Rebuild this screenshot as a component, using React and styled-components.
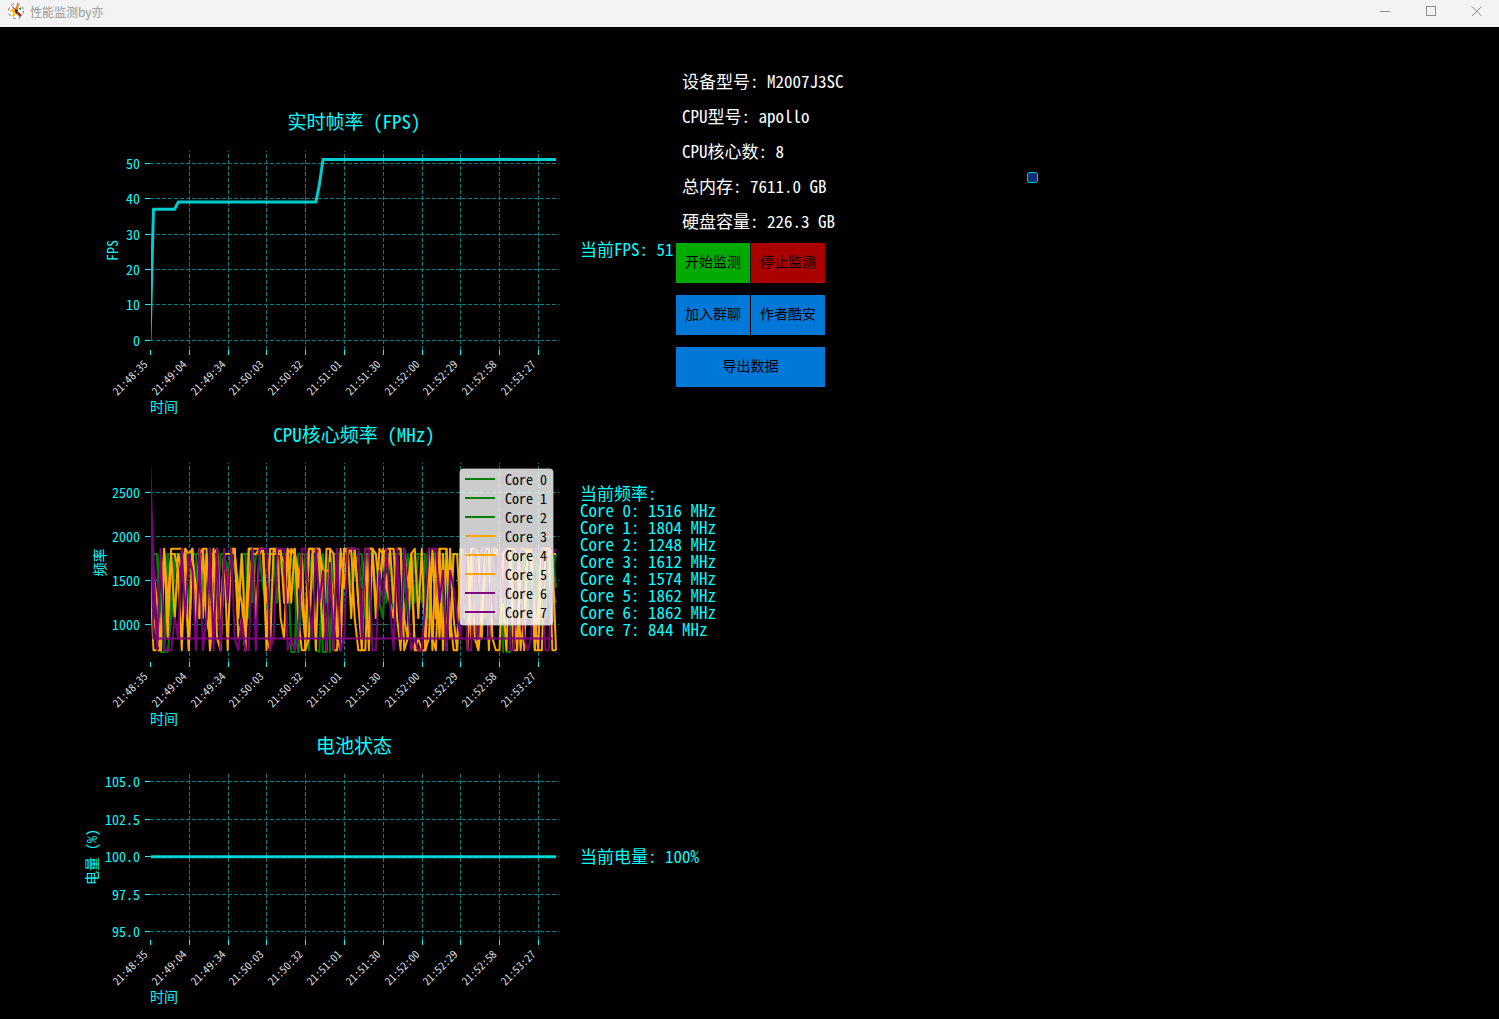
import React from 'react';
import styled, { createGlobalStyle } from 'styled-components';

const CYAN = '#00ffff';

const GlobalStyle = createGlobalStyle`
  body {
    margin: 0;
    background: #000;
    color: #fff;
    font-family: 'Noto Sans CJK SC', sans-serif;
  }
`;

const Window = styled.div`
  display: flex;
  flex-direction: column;
  min-height: 100vh;
  background: #000;
`;

const TitleBar = styled.header`
  display: flex;
  align-items: center;
  height: 27px;
  padding-left: 8px;
  background: #f3f3f3;
  color: #999;
`;

const AppTitle = styled.h1`
  flex: 1;
  margin: 0 0 4px 6px;
  font-size: 12px;
  line-height: 16px;
  font-weight: 400;
`;

const AppIcon = styled.svg`
  width: 16px;
  height: 16px;
  margin-bottom: 5px;
`;

const WindowButton = styled.button`
  display: flex;
  align-items: center;
  justify-content: center;
  width: 46px;
  height: 27px;
  padding: 0 0 5px;
  border: 0;
  background: none;
`;

const Glyph = styled.svg`
  width: 11px;
  height: 11px;
  fill: none;
  stroke: #8c8c8c;
`;

const Dashboard = styled.main`
  flex: 1;
  font-feature-settings: 'hwid';
`;

const Row = styled.section`
  display: flex;
  align-items: flex-start;
`;

const ChartSvg = styled.svg`
  display: block;
  flex: none;
`;

const ChartTitle = styled.text`
  fill: ${CYAN};
  font-size: 19px;
  text-anchor: middle;
`;

const AxisText = styled.text`
  fill: ${CYAN};
  font-size: 14px;
  text-anchor: ${({ $anchor }) => $anchor || 'start'};
`;

const TimeText = styled.text`
  fill: #ddd;
  font-size: 11px;
  text-anchor: end;
`;

const LegendText = styled.text`
  fill: #000;
  font-size: 14px;
`;

const GridLine = styled.line`
  stroke: #008080;
  stroke-dasharray: 4 2;
  shape-rendering: crispEdges;
`;

const Tick = styled.line`
  stroke: ${CYAN};
  shape-rendering: crispEdges;
`;

const Series = styled.polyline`
  fill: none;
  stroke: ${({ $color }) => $color};
  stroke-width: ${({ $width }) => $width || 2}px;
  stroke-opacity: ${({ $opacity }) => $opacity || 1};
  stroke-linejoin: round;
`;

const Status = styled.div`
  display: flex;
  flex-direction: column;
  justify-content: center;
  box-sizing: border-box;
  min-width: 104px;
  height: ${({ $height }) => $height}px;
  margin-top: ${({ $top }) => $top}px;
  padding: 0 0 4px 8px;
  color: ${CYAN};
  font-size: 17px;
  line-height: 17px;
  white-space: nowrap;
`;

const CoreList = styled.ul`
  margin: 0;
  padding: 0;
  list-style: none;
`;

const Controls = styled.div`
  padding-top: 36px;
`;

const DeviceInfo = styled.div`
  padding: 0 0 5px 6px;
  font-size: 17px;
  line-height: 35px;
  white-space: nowrap;
`;

const Buttons = styled.div`
  display: grid;
  grid-template-columns: 74px 74px;
  gap: 12px 1px;
`;

const ActionButton = styled.button`
  grid-column: span ${({ $span }) => $span || 1};
  height: 40px;
  padding: 0 0 4px;
  border: 0;
  background: ${({ $color }) => $color || '#0078d7'};
  color: #000;
  font-family: inherit;
  font-size: 14px;
  white-space: nowrap;
`;

const Marker = styled.span`
  box-sizing: border-box;
  width: 11px;
  height: 11px;
  margin: 145px 0 0 183px;
  border: 1px solid #00d0d8;
  border-radius: 3px;
  background: #0d2f7a;
`;

const CHART_WIDTH = 572;
const PLOT_LEFT = 150;
const PLOT_RIGHT = 559;
const SAMPLE_STEP = 3.53;

const times = [
  '21:48:35', '21:49:04', '21:49:34', '21:50:03', '21:50:32', '21:51:01',
  '21:51:30', '21:52:00', '21:52:29', '21:52:58', '21:53:27',
];

const deviceInfo = [
  '设备型号: M2007J3SC',
  'CPU型号: apollo',
  'CPU核心数: 8',
  '总内存: 7611.0 GB',
  '硬盘容量: 226.3 GB',
];

// One character per sample, each one a frequency step of the governor
const steps = {
  0: 691, 1: 710, 2: 844, 3: 1075, 4: 1250,
  5: 1420, 6: 1612, 7: 1700, 8: 1804, 9: 1862, A: 2840,
};

const decode = log => log.split('').map(c => steps[c]);

const cores = [
  { color: 'green', now: 1516, log: '6880088368888838388388588388358888888886850588588008388888853838858483883584888388835888888583886838483888638853388545' },
  { color: 'green', now: 1804, log: '5883083887488885388438688488848854888858008884688580888885688388843885888348548388885688835888438858083886838883886888' },
  { color: 'green', now: 1248, log: '6884103688848385844838586584388884384888580881810848568888685888348888835848884388888588888843888638800884888388885434' },
  { color: 'orange', now: 1612, log: '6111929999519289919218199231999994888874986429996299119599941999858999319581111821999311988821999211899419989119991166' },
  { color: 'orange', now: 1574, log: '6641838386918539328918889382588991999329895812899519823989311199398594991281211293919288391998291998419981398149998166' },
  { color: 'orange', now: 1862, log: '6321948861989393814938498541993892198949493119919666421993942819459543993289391919281931988291382988499118198311998888' },
  { color: 'purple', now: 1862, log: 'A7191113293861913919194921311919991299912129942946171912999929911649419294121149994616532911929929394911992129991189' },
  { color: 'purple', now: 844, log: 'A'.padEnd(115, '2') },
];

const fps = Array.from({ length: 116 }, (_, i) => {
  if (i === 0) return 0;
  if (i < 8) return 37;
  if (i < 48) return 39;
  return i === 48 ? 44 : 51;
});

const battery = Array(116).fill(100);

function Chart({ height, title, titleY, top, bottom, ticks, scale, yLabel, yLabelX, children }) {
  const clipId = `plot-${top}-${bottom}`;
  return (
    <ChartSvg
      width={CHART_WIDTH}
      height={height}
      viewBox={`0 0 ${CHART_WIDTH} ${height}`}
      role="img"
      aria-label={title}
    >
      <clipPath id={clipId}>
        <rect x={PLOT_LEFT + 1} y={top} width={PLOT_RIGHT - PLOT_LEFT} height={bottom - top} />
      </clipPath>
      <ChartTitle x="354" y={titleY}>{title}</ChartTitle>
      <AxisText
        $anchor="middle"
        transform={`translate(${yLabelX} ${(top + bottom) / 2}) rotate(-90)`}
      >
        {yLabel}
      </AxisText>
      {ticks.map(tick => {
        const y = Math.floor(scale(Number(tick))) + 0.5;
        return (
          <g key={tick}>
            <GridLine x1={PLOT_LEFT} x2={PLOT_RIGHT} y1={y} y2={y} />
            <Tick x1={PLOT_LEFT - 5} x2={PLOT_LEFT} y1={y} y2={y} />
            <AxisText $anchor="end" x="140" y={y + 5}>{tick}</AxisText>
          </g>
        );
      })}
      {times.map((time, i) => {
        const x = Math.round(PLOT_LEFT + i * 38.8) + 0.5;
        return (
          <g key={time}>
            {i > 0 && <GridLine x1={x} x2={x} y1={bottom} y2={top} />}
            <Tick x1={x} x2={x} y1={bottom} y2={bottom + 5} />
            <TimeText transform={`translate(${x - 2} ${bottom + 15}) rotate(-45)`}>
              {time}
            </TimeText>
          </g>
        );
      })}
      <g clipPath={`url(#${clipId})`}>{children}</g>
      <AxisText x="150" y={bottom + 62}>时间</AxisText>
    </ChartSvg>
  );
}

const toPoints = (values, scale) =>
  values
    .slice(0, 116)
    .map((v, i) => `${(PLOT_LEFT + i * SAMPLE_STEP).toFixed(1)},${scale(v).toFixed(1)}`)
    .join(' ');

const fpsScale = v => 313.4 - v * 3.545;
const freqScale = v => 297.7 - v * 0.088;
const batteryScale = v => 129.7 - (v - 100) * 15.05;

function Legend() {
  return (
    <g>
      <rect x="460" y="54" width="93" height="156" rx="3" fill="#fff" fillOpacity="0.8" stroke="#ccc" strokeOpacity="0.8" />
      {cores.map((core, i) => (
        <g key={i}>
          <line x1="465" x2="495" y1={64 + i * 19} y2={64 + i * 19} stroke={core.color} strokeWidth="2" />
          <LegendText x="505" y={70 + i * 19}>Core {i}</LegendText>
        </g>
      ))}
    </g>
  );
}

export default function App() {
  return (
    <Window>
      <GlobalStyle />
      <TitleBar>
        <AppIcon viewBox="0 0 16 16" aria-hidden="true">
          <circle cx="8" cy="8" r="7.5" fill="#fff" stroke="#777" strokeDasharray="3 3" />
          <path d="M3 2l6 5-2 2z" fill="#e34a1a" />
          <path d="M9 1l2 1-2 6-2-1z" fill="#f07818" />
          <path d="M1 7l6-1 2 2-3 2z" fill="#f5b800" />
          <path d="M6 8l3 0-3 6-2-1z" fill="#f5c400" />
          <path d="M7 6l3 1-1 4-2-2z" fill="#222" />
          <path d="M9 8l5 4-2 2-4-4z" fill="#a02818" />
          <path d="M10 6l3-2v3z" fill="#2f8f3a" />
        </AppIcon>
        <AppTitle>性能监测by亦</AppTitle>
        <WindowButton aria-label="最小化">
          <Glyph viewBox="0 0 11 11"><path d="M1 5.5h10" /></Glyph>
        </WindowButton>
        <WindowButton aria-label="最大化">
          <Glyph viewBox="0 0 11 11"><rect x="1.5" y="0.5" width="9" height="9" /></Glyph>
        </WindowButton>
        <WindowButton aria-label="关闭">
          <Glyph viewBox="0 0 11 11"><path d="M1 0.5l9.5 9.5M10.5 0.5L1 10" /></Glyph>
        </WindowButton>
      </TitleBar>
      <Dashboard>
        <Row>
          <Chart
            height={388}
            title="实时帧率 (FPS)"
            titleY={102}
            top={124}
            bottom={323}
            ticks={['50', '40', '30', '20', '10', '0']}
            scale={fpsScale}
            yLabel="FPS"
            yLabelX={118}
          >
            <Series $color={CYAN} $width={3} $opacity={0.8} points={toPoints(fps, fpsScale)} />
          </Chart>
          <Status $top={124} $height={199}>当前FPS: 51</Status>
          <Controls>
            <DeviceInfo>
              {deviceInfo.map(line => <div key={line}>{line}</div>)}
            </DeviceInfo>
            <Buttons>
              <ActionButton $color="#00aa00">开始监测</ActionButton>
              <ActionButton $color="#aa0000">停止监测</ActionButton>
              <ActionButton>加入群聊</ActionButton>
              <ActionButton>作者酷安</ActionButton>
              <ActionButton $span={2}>导出数据</ActionButton>
            </Buttons>
          </Controls>
          <Marker />
        </Row>
        <Row>
          <Chart
            height={312}
            title="CPU核心频率 (MHz)"
            titleY={27}
            top={48}
            bottom={247}
            ticks={['2500', '2000', '1500', '1000']}
            scale={freqScale}
            yLabel="频率"
            yLabelX={105}
          >
            {cores.map((core, i) => (
              <Series key={i} $color={core.color} points={toPoints(decode(core.log), freqScale)} />
            ))}
            <Legend />
          </Chart>
          <Status $top={48} $height={199}>
            当前频率:
            <CoreList>
              {cores.map((core, i) => <li key={i}>Core {i}: {core.now} MHz</li>)}
            </CoreList>
          </Status>
        </Row>
        <Row>
          <Chart
            height={292}
            title="电池状态"
            titleY={26}
            top={47}
            bottom={213}
            ticks={['105.0', '102.5', '100.0', '97.5', '95.0']}
            scale={batteryScale}
            yLabel="电量 (%)"
            yLabelX={97}
          >
            <Series $color={CYAN} $width={3} $opacity={0.8} points={toPoints(battery, batteryScale)} />
          </Chart>
          <Status $top={47} $height={166}>当前电量: 100%</Status>
        </Row>
      </Dashboard>
    </Window>
  );
}
